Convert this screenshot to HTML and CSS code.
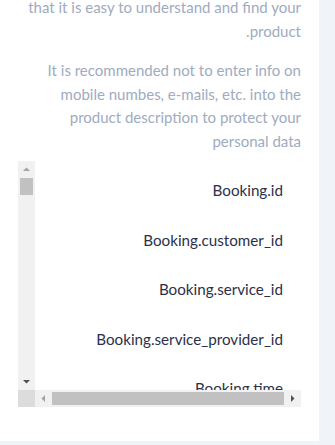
FILE: index.html
```html
<!doctype html>
<html lang="en">
  <head>
    <meta charset="UTF-8" />
    <meta name="viewport" content="width=device-width, initial-scale=1.0" />
    <title>Product description</title>
    <link rel="stylesheet" href="styles.css">
  </head>
  <body>
    <div class="page">
      <section class="card">
        <p class="hint">
          that it is easy to understand and find your product.
        </p>
        <p class="hint">
          It is recommended not to enter info on mobile numbes, e-mails, etc.
          into the product description to protect your personal data
        </p>

        <!-- Field list with classic scrollbars -->
        <div class="field-box">
          <div class="vbar">
            <span class="sb-btn">
              <svg width="17" height="17" viewBox="0 0 17 17"><path d="M5 10h7L8.5 6.5z" fill="#a3a3a3"/></svg>
            </span>
            <span class="vtrack"><span class="vthumb"></span></span>
            <span class="sb-btn">
              <svg width="17" height="17" viewBox="0 0 17 17"><path d="M5 7h7L8.5 10.5z" fill="#505050"/></svg>
            </span>
          </div>
          <div class="field-view">
            <ul class="field-list">
              <li>Booking.id</li>
              <li>Booking.customer_id</li>
              <li>Booking.service_id</li>
              <li>Booking.service_provider_id</li>
              <li>Booking.time</li>
            </ul>
          </div>
          <div class="corner"></div>
          <div class="hbar">
            <span class="sb-btn">
              <svg width="17" height="17" viewBox="0 0 17 17"><path d="M10 5v7L6.5 8.5z" fill="#a3a3a3"/></svg>
            </span>
            <span class="hthumb"></span>
            <span class="sb-btn">
              <svg width="17" height="17" viewBox="0 0 17 17"><path d="M7 5v7L10.5 8.5z" fill="#505050"/></svg>
            </span>
          </div>
        </div>
      </section>
    </div>
  </body>
</html>
```

FILE: styles.css
```css
* {
  margin: 0;
  padding: 0;
  box-sizing: border-box;
}

body {
  font-family: Lato, 'Noto Sans', sans-serif;
  background: #f0f3f8;
  color: #2c3049;
}

.page {
  width: 335px;
  height: 445px;
  overflow: hidden;
}

.card {
  background: white;
  width: 319px;
  height: 445px;
  margin-top: -4px;
  padding: 0 18px;
}

.hint {
  font-size: 15px;
  line-height: 23.5px;
  color: #a0abc0;
  text-align: right;
  direction: rtl;
  margin-bottom: 16px;
}

.field-box {
  margin-top: -8px;
  height: 246px;
  display: grid;
  grid-template-columns: 17px 1fr;
  grid-template-rows: 1fr 17px;
}

.field-view {
  overflow: hidden;
}

.field-list {
  list-style: none;
  text-align: right;
  padding-right: 18px;
}

.field-list li {
  font-size: 15.2px;
  line-height: 20px;
  padding: 19px 0 10.5px;
  white-space: nowrap;
}

/* scrollbars */
.vbar,
.hbar {
  display: flex;
  background: #f1f1f1;
}

.vbar {
  flex-direction: column;
}

.sb-btn {
  width: 17px;
  height: 17px;
  flex: none;
  display: flex;
}

.vtrack {
  flex: 1;
  padding: 0 2px;
}

.vthumb {
  display: block;
  height: 17px;
  background: #c1c1c1;
}

.hthumb {
  flex: 1;
  margin: 2px 0;
  background: #c1c1c1;
}

.corner {
  background: #dcdcdc;
}
```
